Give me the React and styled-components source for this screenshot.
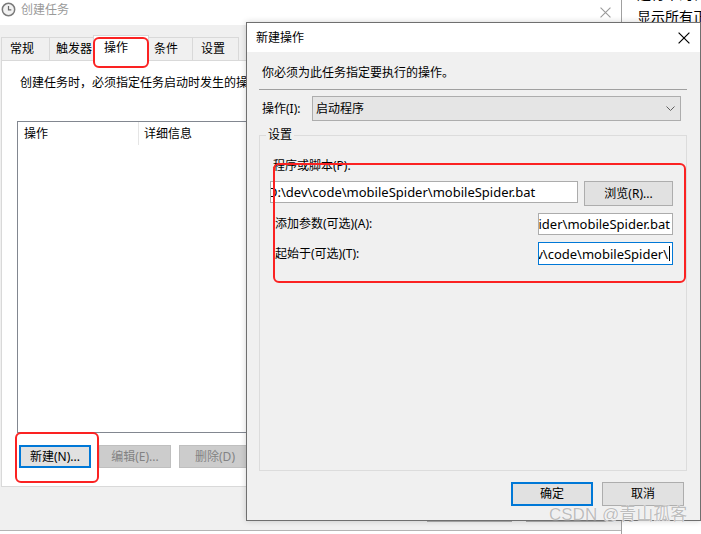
import React from 'react';
import styled, { createGlobalStyle } from 'styled-components';

const GlobalStyle = createGlobalStyle`
  html, body {
    margin: 0;
    padding: 0;
    background: #fff;
  }
  body {
    font-family: "Noto Sans", "Noto Sans CJK SC", sans-serif;
    font-size: 12px;
    color: #000;
  }
`;

const Desktop = styled.div`
  position: relative;
  width: 701px;
  height: 534px;
  overflow: hidden;
  background: #fff;
`;

/* ---------- window behind, on the right ---------- */

const SideWindow = styled.div`
  position: absolute;
  left: 621px;
  top: 0;
  width: 90px;
  height: 534px;
  border-left: 1px solid #a0a0a0;
  background: #fff;
  padding-left: 15px;
  font-size: 14px;
  line-height: 20px;
  white-space: nowrap;
  >div:first-child {
    margin-top: -16px;
  }
  >div:nth-child(2) {
    margin-top: 3px;
  }
`;

/* ---------- 创建任务 window ---------- */

const TaskWindow = styled.div`
  position: absolute;
  left: 0;
  top: 0;
  width: 621px;
  height: 531px;
  box-sizing: border-box;
  background: #f0f0f0;
  border-bottom: 1px solid #b4b4b4;
  display: flex;
  flex-direction: column;
`;

const TitleBar = styled.div`
  height: 25px;
  flex: none;
  background: #fff;
  display: flex;
  align-items: flex-start;
  gap: 5px;
  padding: 2px 10px 0 1px;
  box-sizing: border-box;
`;

const WinTitle = styled.span`
  flex: 1;
  color: #9a9a9a;
  line-height: 16px;
`;

const TaskBody = styled.div`
  padding: 12px 6px 0 1px;
  display: flex;
  flex-direction: column;
`;

const TabRow = styled.div`
  display: flex;
  align-items: flex-end;
  height: 26px;
  margin-top: -2px;
  margin-bottom: -1px;
  position: relative;
  z-index: 1;
`;

const Tab = styled.div`
  width: ${p => p.$w}px;
  height: ${p => (p.$active ? 26 : 24)}px;
  box-sizing: border-box;
  margin-left: -1px;
  border: 1px solid #d9d9d9;
  border-bottom: ${p => (p.$active ? 'none' : '1px solid #d9d9d9')};
  background: ${p => (p.$active ? '#fff' : '#f0f0f0')};
  padding-left: ${p => p.$pad || 6}px;
  display: flex;
  align-items: center;
  line-height: 16px;
  padding-bottom: ${p => (p.$active ? 2 : 0)}px;
  &:first-child {
    margin-left: 0;
  }
`;

const Panel = styled.div`
  width: 614px;
  height: 427px;
  box-sizing: border-box;
  background: #fff;
  border: 1px solid #d9d9d9;
  padding: 14px 0 0 15px;
`;

const Intro = styled.div`
  margin-left: 3px;
  line-height: 16px;
  white-space: nowrap;
`;

const ListBox = styled.div`
  margin-top: 30px;
  width: 600px;
  height: 312px;
  box-sizing: border-box;
  border: 1px solid #828790;
  background: #fff;
`;

const ListHead = styled.div`
  display: flex;
  height: 23px;
`;

const HeadCell = styled.div`
  width: ${p => p.$w}px;
  box-sizing: border-box;
  padding-left: ${p => p.$pad}px;
  line-height: 23px;
  border-right: ${p => (p.$sep ? '1px solid #e5e5e5' : 'none')};
`;

const ButtonRow = styled.div`
  display: flex;
  gap: ${p => p.$gap || 8}px;
  justify-content: ${p => (p.$end ? 'flex-end' : 'flex-start')};
  margin-top: ${p => p.$top || 0}px;
  margin-left: ${p => p.$left || 0}px;
  padding-right: ${p => p.$right || 0}px;
`;

const WinButton = styled.div`
  width: ${p => p.$w || 72}px;
  height: ${p => p.$h || 23}px;
  flex: none;
  box-sizing: border-box;
  display: flex;
  align-items: center;
  justify-content: center;
  line-height: 16px;
  white-space: nowrap;
  background: ${p => (p.$disabled ? '#cccccc' : '#e1e1e1')};
  color: ${p => (p.$disabled ? '#838383' : '#000')};
  border: ${p =>
    p.$default ? '2px solid #0078d7' : p.$disabled ? '1px solid #bfbfbf' : '1px solid #adadad'};
`;

const TaskFooter = styled.div`
  padding-top: 11px;
`;

/* ---------- 新建操作 dialog ---------- */

const Dialog = styled.div`
  position: absolute;
  left: 246px;
  top: 22px;
  width: 455px;
  height: 499px;
  box-sizing: border-box;
  border: 1px solid #6f6f6f;
  background: #f0f0f0;
  display: flex;
  flex-direction: column;
  z-index: 2;
  box-shadow: 0 0 6px rgba(0, 0, 0, 0.18);
`;

const DialogTitle = styled.div`
  height: 29px;
  flex: none;
  background: #fff;
  display: flex;
  align-items: center;
  justify-content: space-between;
  padding: 0 10px 0 9px;
  line-height: 16px;
`;

const DialogBody = styled.div`
  flex: 1;
  display: flex;
  flex-direction: column;
  padding: 13px 13px 0 12px;
`;

const Prompt = styled.div`
  margin-left: 3px;
  line-height: 16px;
`;

const Rule = styled.div`
  margin-top: 8px;
  border-top: 1px solid #a0a0a0;
`;

const ComboRow = styled.div`
  margin-top: 6px;
  display: flex;
  align-items: center;
  height: 25px;
  padding-right: 6px;
`;

const ComboLabel = styled.div`
  width: 53px;
  padding-left: 3px;
  box-sizing: border-box;
  line-height: 16px;
`;

const Combo = styled.div`
  flex: 1;
  height: 25px;
  box-sizing: border-box;
  background: #e5e5e5;
  border: 1px solid #adadad;
  display: flex;
  align-items: center;
  justify-content: space-between;
  padding: 0 5px 0 3px;
  line-height: 16px;
`;

const Group = styled.fieldset`
  margin: 6px 0 0 0;
  height: 344px;
  box-sizing: border-box;
  border: 1px solid #dcdcdc;
  padding: 0 7px 0 6px;
  min-width: 0;
`;

const Legend = styled.legend`
  padding: 0 2px;
  line-height: 16px;
  font-size: 12px;
`;

const GroupInner = styled.div`
  padding: 0 6px 0 4px;
`;

const FieldLabel = styled.div`
  line-height: 16px;
  margin-left: ${p => p.$left || 0}px;
  margin-top: ${p => p.$top || 0}px;
  white-space: nowrap;
`;

const FieldRow = styled.div`
  display: flex;
  align-items: ${p => (p.$center ? 'center' : 'flex-start')};
  justify-content: ${p => (p.$spread ? 'space-between' : 'flex-start')};
  margin-top: ${p => p.$top || 0}px;
  gap: 6px;
`;

const TextBox = styled.div`
  width: ${p => p.$w}px;
  height: ${p => p.$h || 22}px;
  flex: none;
  box-sizing: border-box;
  background: #fff;
  border: 1px solid ${p => (p.$focus ? '#0078d7' : '#acacac')};
  display: flex;
  align-items: center;
  justify-content: ${p => (p.$right ? 'flex-end' : 'flex-start')};
  overflow: hidden;
  white-space: nowrap;
  padding: 0 ${p => (p.$right ? 2 : 0)}px 0 0;
  font-size: 13px;
  line-height: 16px;
  >span {
    flex: none;
    margin-left: ${p => p.$shift || 0}px;
  }
`;

const Caret = styled.i`
  flex: none;
  width: 1px;
  height: 15px;
  background: #000;
  margin-left: 1px;
`;

/* ---------- overlays ---------- */

const Mark = styled.div`
  position: absolute;
  left: ${p => p.$x}px;
  top: ${p => p.$y}px;
  width: ${p => p.$w}px;
  height: ${p => p.$h}px;
  box-sizing: border-box;
  border: 2.5px solid #fb2222;
  border-radius: 6px;
  z-index: 5;
`;

const Watermark = styled.div`
  position: absolute;
  left: 549px;
  top: 504px;
  z-index: 6;
  font-family: "Liberation Sans", "Noto Sans CJK SC", sans-serif;
  font-size: 17px;
  line-height: 22px;
  color: #bdbdbd;
  text-shadow: 0 0 1px #fff, 0 0 1px #fff;
  white-space: nowrap;
`;

const ClockIcon = () => (
  <svg width="15" height="15" viewBox="0 0 16 16">
    <circle cx="8" cy="8" r="6.6" fill="#f2f2f2" stroke="#7a7a7a" strokeWidth="1.6" />
    <path d="M8 4.2V8.3H11" fill="none" stroke="#6a6a6a" strokeWidth="1.3" />
  </svg>
);

const CloseIcon = ({ size = 10, color = '#000' }) => (
  <svg width={size} height={size} viewBox="0 0 10 10">
    <path d="M0.5 0.5L9.5 9.5M9.5 0.5L0.5 9.5" stroke={color} strokeWidth="1" fill="none" />
  </svg>
);

const Chevron = () => (
  <svg width="9" height="5" viewBox="0 0 9 5">
    <path d="M0.5 0.5L4.5 4.5L8.5 0.5" stroke="#5f5f5f" fill="none" />
  </svg>
);

const tabs = [
  { label: '常规', w: 49, pad: 8 },
  { label: '触发器', w: 45, pad: 6 },
  { label: '操作', w: 56, pad: 10, active: true },
  { label: '条件', w: 45, pad: 5 },
  { label: '设置', w: 47, pad: 8 },
];

const scriptPath = 'D:\\dev\\code\\mobileSpider\\mobileSpider.bat';

export default function App() {
  return (
    <Desktop>
      <GlobalStyle />

      <SideWindow>
        <div>运行中的任务</div>
        <div>显示所有正在运行的任务</div>
      </SideWindow>

      <TaskWindow>
        <TitleBar>
          <ClockIcon />
          <WinTitle>创建任务</WinTitle>
          <div style={{ marginTop: 3 }}>
            <CloseIcon size={11} color="#9a9a9a" />
          </div>
        </TitleBar>
        <TaskBody>
          <TabRow>
            {tabs.map(t => (
              <Tab key={t.label} $w={t.w} $pad={t.pad} $active={t.active}>
                {t.label}
              </Tab>
            ))}
          </TabRow>
          <Panel>
            <Intro>创建任务时，必须指定任务启动时发生的操作。</Intro>
            <ListBox>
              <ListHead>
                <HeadCell $w={121} $pad={6} $sep>操作</HeadCell>
                <HeadCell $w={200} $pad={5}>详细信息</HeadCell>
              </ListHead>
            </ListBox>
            <ButtonRow $top={12} $left={2}>
              <WinButton $default>新建(N)...</WinButton>
              <WinButton $disabled>编辑(E)...</WinButton>
              <WinButton $disabled>删除(D)</WinButton>
            </ButtonRow>
          </Panel>
          <TaskFooter>
            <ButtonRow $end $gap={14} $right={4}>
              <WinButton $w={85} $h={24}>确定</WinButton>
              <WinButton $w={85} $h={24}>取消</WinButton>
            </ButtonRow>
          </TaskFooter>
        </TaskBody>
      </TaskWindow>

      <Dialog>
        <DialogTitle>
          <span>新建操作</span>
          <CloseIcon size={12} />
        </DialogTitle>
        <DialogBody>
          <Prompt>你必须为此任务指定要执行的操作。</Prompt>
          <Rule />
          <ComboRow>
            <ComboLabel>操作(I):</ComboLabel>
            <Combo>
              <span>启动程序</span>
              <Chevron />
            </Combo>
          </ComboRow>
          <Group>
            <Legend>设置</Legend>
            <GroupInner>
              <FieldLabel $left={3} $top={15}>程序或脚本(P):</FieldLabel>
              <FieldRow $top={7}>
                <TextBox $w={308} $h={22} $shift={-3}>
                  <span>{scriptPath}</span>
                </TextBox>
                <WinButton $w={89} $h={25}>浏览(R)...</WinButton>
              </FieldRow>
              <FieldRow $center $spread $top={7}>
                <FieldLabel $left={5}>添加参数(可选)(A):</FieldLabel>
                <TextBox $w={135} $h={22} $right>
                  <span>{scriptPath}</span>
                </TextBox>
              </FieldRow>
              <FieldRow $center $spread $top={7}>
                <FieldLabel $left={5}>起始于(可选)(T):</FieldLabel>
                <TextBox $w={135} $h={23} $right $focus>
                  <span>D:\dev\code\mobileSpider\</span>
                  <Caret />
                </TextBox>
              </FieldRow>
            </GroupInner>
          </Group>
          <ButtonRow $end $gap={9} $top={11} $right={3}>
            <WinButton $w={82} $h={24} $default>确定</WinButton>
            <WinButton $w={82} $h={24}>取消</WinButton>
          </ButtonRow>
        </DialogBody>
      </Dialog>

      <Mark $x={93} $y={37} $w={56} $h={31} />
      <Mark $x={15} $y={432} $w={84} $h={51} />
      <Mark $x={273} $y={163} $w={413} $h={120} />

      <Watermark>CSDN @青山孤客</Watermark>
    </Desktop>
  );
}
